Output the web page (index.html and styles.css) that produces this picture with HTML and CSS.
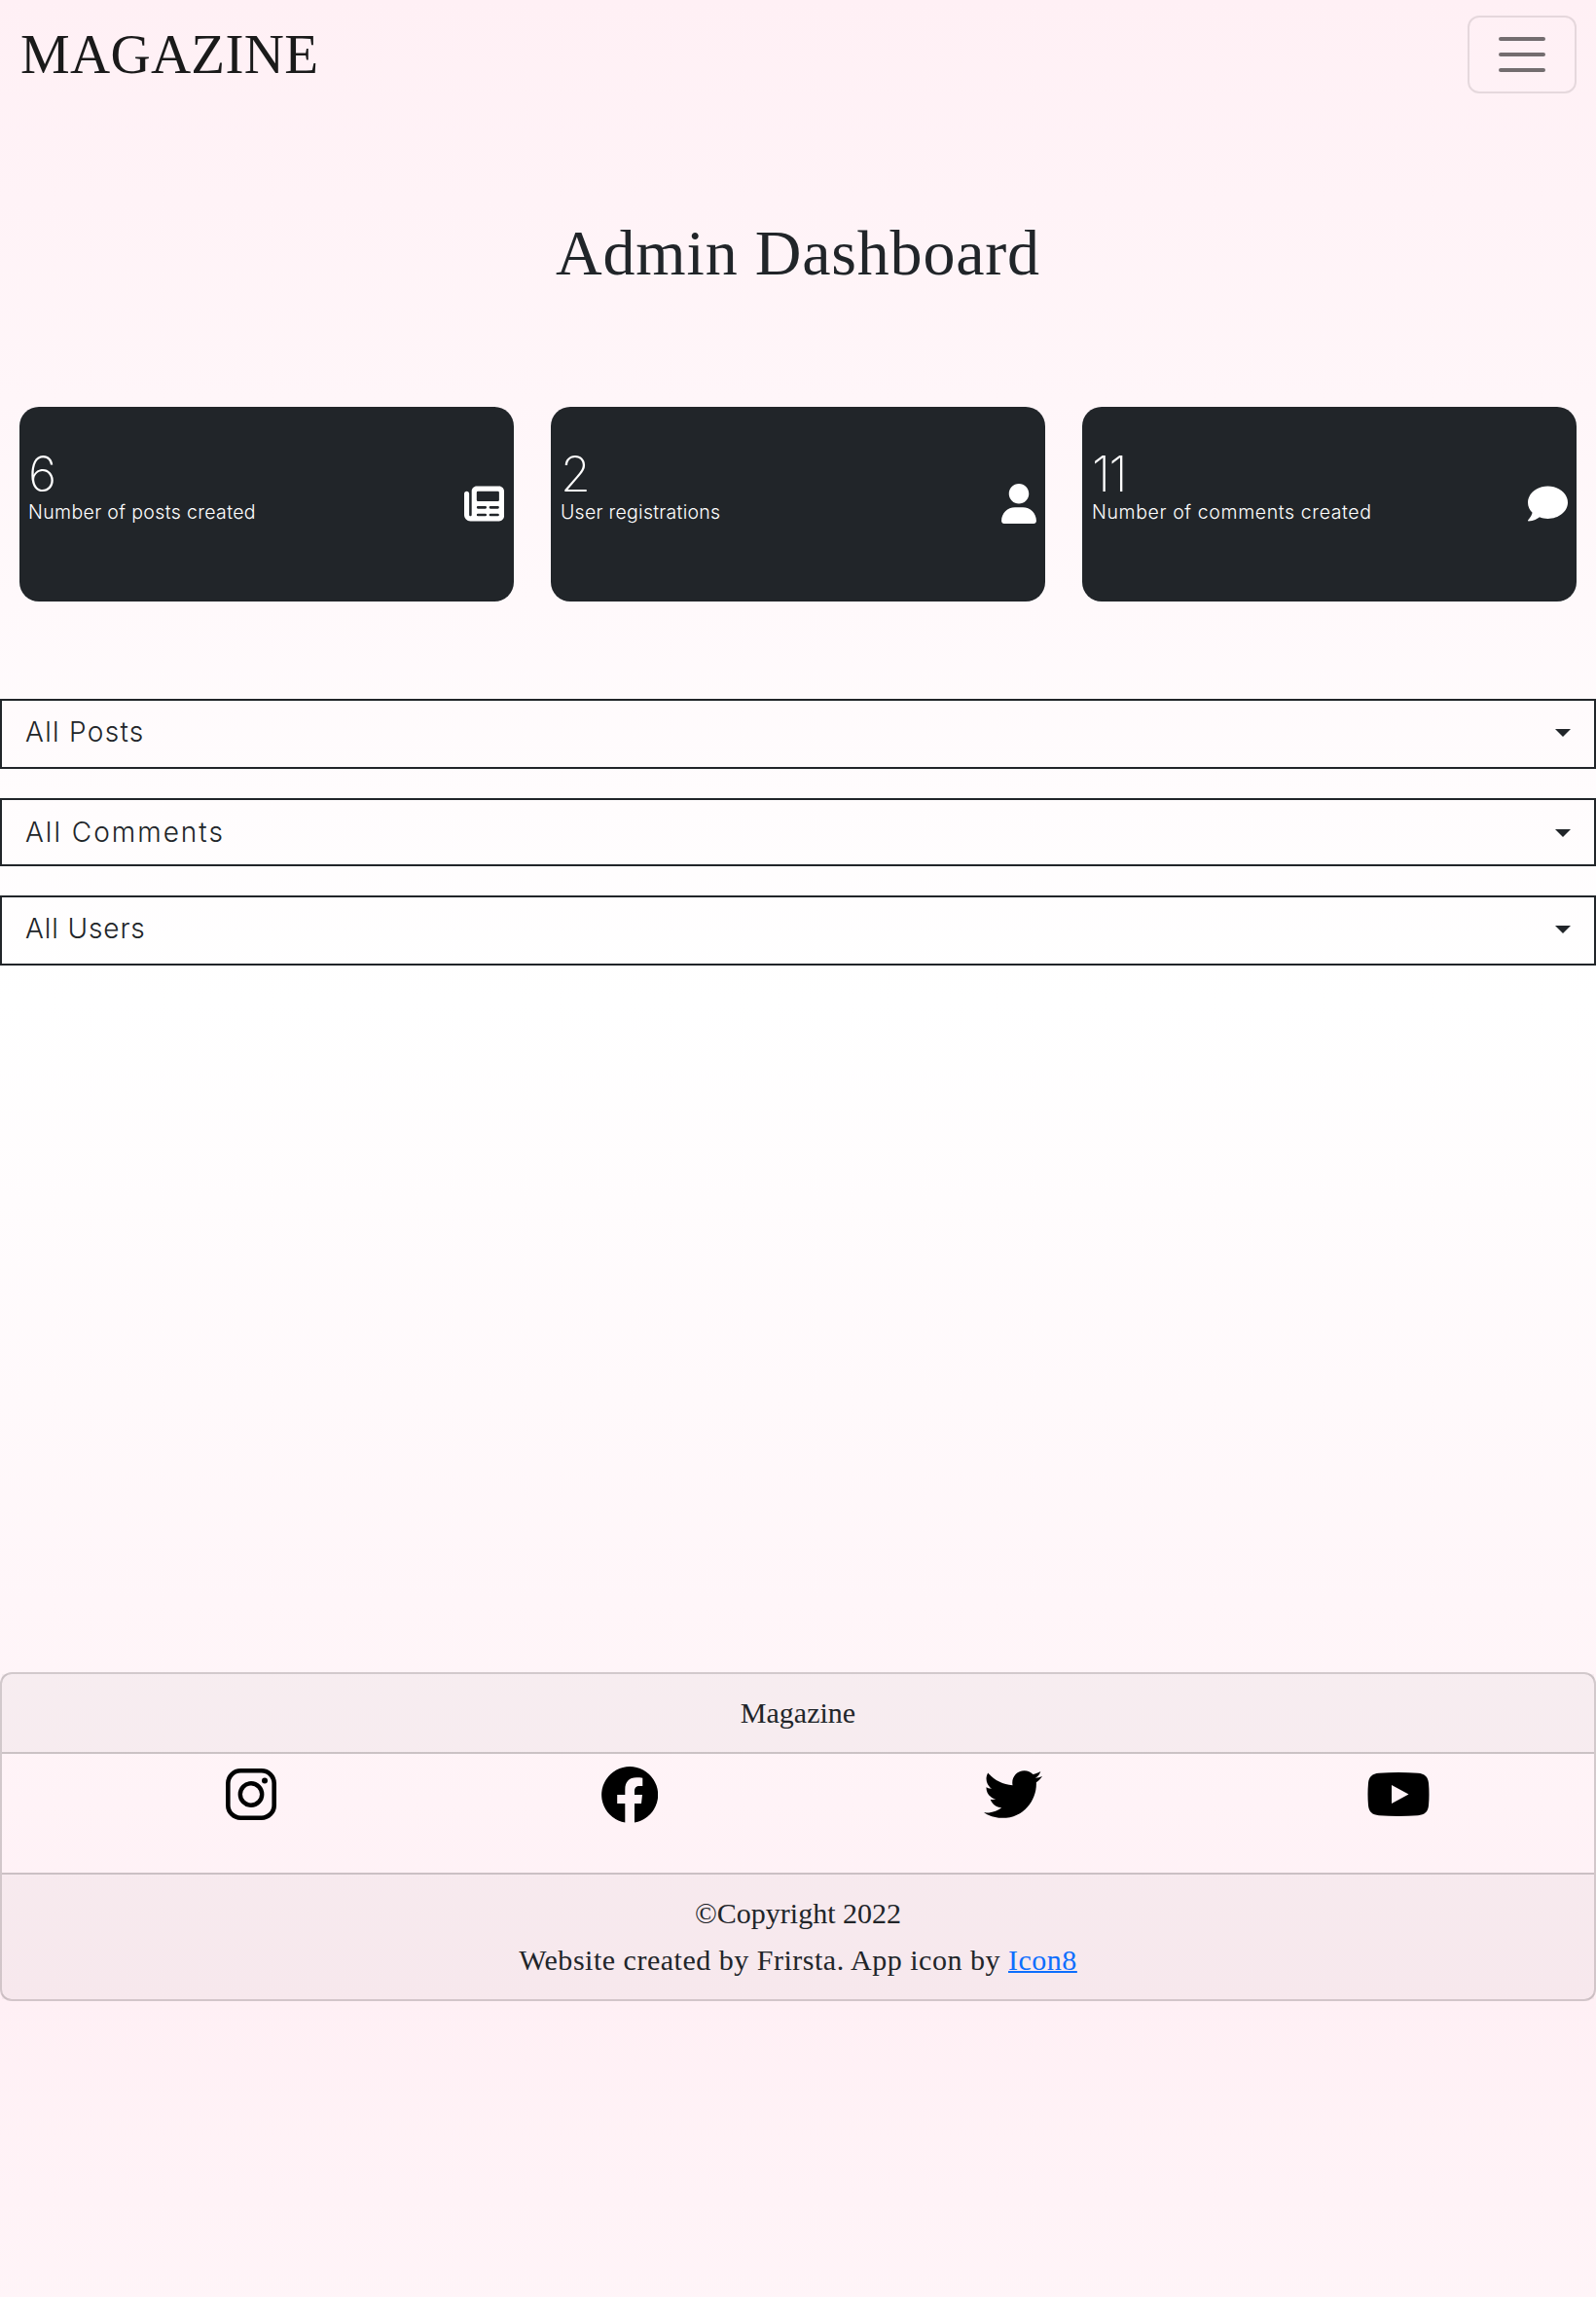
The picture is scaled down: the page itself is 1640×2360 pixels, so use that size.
FILE: index.html
```html
<!DOCTYPE html>
<html lang="en">
<head>
<meta charset="utf-8">
<title>Admin Dashboard</title>
<link rel="stylesheet" href="styles.css">
</head>
<body>
<nav class="navbar">
  <a class="brand">MAGAZINE</a>
  <button class="toggler" aria-label="Toggle navigation">
    <svg width="60" height="60" viewBox="0 0 30 30"><path stroke="rgba(0,0,0,.55)" stroke-linecap="round" stroke-width="2" d="M4 7h22M4 15h22M4 23h22"/></svg>
  </button>
</nav>
<main class="main">
  <h1 class="title">Admin Dashboard</h1>
  <section class="stats">
    <article class="stat">
      <div><div class="number">6</div><div class="label label-posts">Number of posts created</div></div>
      <svg width="41" height="41" viewBox="0 0 512 512"><path fill="#fff" fill-rule="evenodd" d="M160 32H448C483 32 512 61 512 96V416C512 451 483 480 448 480H80C36 480 0 444 0 400V128C0 110 14 96 32 96S64 110 64 128V400C64 409 71 416 80 416S96 409 96 400V96C96 61 125 32 160 32ZM160 112V208Q160 224 176 224H432Q448 224 448 208V112Q448 96 432 96H176Q160 96 160 112ZM176 288A16 16 0 0 0 176 320H272A16 16 0 0 0 272 288ZM336 288A16 16 0 0 0 336 320H432A16 16 0 0 0 432 288ZM176 384A16 16 0 0 0 176 416H272A16 16 0 0 0 272 384ZM336 384A16 16 0 0 0 336 416H432A16 16 0 0 0 432 384Z"/></svg>
    </article>
    <article class="stat stat-wide">
      <div><div class="number">2</div><div class="label label-users">User registrations</div></div>
      <svg width="36" height="41" viewBox="0 0 448 512"><path fill="#fff" d="M224 256c70.7 0 128-57.3 128-128S294.700 0 224 0 96 57.300 96 128s57.300 128 128 128zM274.700 304H173.300C77.600 304 0 381.600 0 477.300c0 19.100 15.500 34.700 34.700 34.700h378.700c19.100 0 34.600-15.500 34.600-34.700C448 381.600 370.400 304 274.700 304z"/></svg>
    </article>
    <article class="stat stat-wide">
      <div><div class="number number-tight">11</div><div class="label label-comments">Number of comments created</div></div>
      <svg width="41" height="41" viewBox="0 0 512 512"><path fill="#fff" d="M256 32C114.600 32 0 125.100 0 240c0 49.600 21.400 95 57 130.700-12.500 50.400-54.300 95.300-54.800 95.800-2.200 2.200-2.900 5.700-1.500 8.700S4.800 480 8 480c66.300 0 116-31.800 140.600-51.400C181.200 440.900 217.600 448 256 448c141.400 0 256-93.100 256-208S397.400 32 256 32z"/></svg>
    </article>
  </section>
  <section class="panels">
    <button class="panel panel-posts"><span>All Posts</span><i class="caret"></i></button>
    <button class="panel panel-comments"><span>All Comments</span><i class="caret"></i></button>
    <button class="panel panel-users"><span>All Users</span><i class="caret"></i></button>
  </section>
</main>
<footer class="footer">
  <div class="footer-head">Magazine</div>
  <div class="social">
    <svg width="52" height="53" viewBox="0 0 52 53"><rect x="2.300" y="2.300" width="47.400" height="48.400" rx="13" fill="none" stroke="#000" stroke-width="4.600"/><circle cx="26" cy="26.500" r="11.200" fill="none" stroke="#000" stroke-width="4.400"/><circle cx="40" cy="12.500" r="3"/></svg>
    <svg width="58" height="58" viewBox="0 0 58 58"><path d="M24.300 57.600A29 29 0 1 1 34 57.600V38H41L42 29H34V25.500C34 21.500 36 20 39 20H42.300V11.700C40.500 11.400 38.500 11.200 36 11.200C28.500 11.200 24.300 15.500 24.300 23.500V29H16.200V38H24.300Z"/></svg>
    <svg width="60" height="49" viewBox="0 48 512 416"><path d="M459.370 151.716c.325 4.548.325 9.097.325 13.645 0 138.720-105.583 298.558-298.558 298.558-59.452 0-114.680-17.219-161.137-47.106 8.447.974 16.568 1.299 25.340 1.299 49.055 0 94.213-16.568 130.274-44.832-46.132-.975-84.792-31.188-98.112-72.772 6.498.974 12.995 1.624 19.818 1.624 9.421 0 18.843-1.300 27.614-3.573-48.081-9.747-84.143-51.980-84.143-102.985v-1.299c13.969 7.797 30.214 12.670 47.431 13.319-28.264-18.843-46.781-51.005-46.781-87.391 0-19.492 5.197-37.360 14.294-52.954 51.655 63.675 129.300 105.258 216.365 109.807-1.624-7.797-2.599-15.918-2.599-24.040 0-57.828 46.782-104.934 104.934-104.934 30.213 0 57.502 12.670 76.670 33.137 23.715-4.548 46.456-13.320 66.599-25.340-7.798 24.366-24.366 44.833-46.132 57.827 21.117-2.273 41.584-8.122 60.426-16.243-14.292 20.791-32.161 39.308-52.628 54.253z"/></svg>
    <svg width="64" height="45" viewBox="0 0 64 45"><path fill-rule="evenodd" d="M12 .8Q32-.8 52 .8C59 1.400 62.300 4.500 63 11Q64 22.500 63 34C62.300 40.500 59 43.600 52 44.200Q32 45.800 12 44.200C5 43.600 1.700 40.500 1 34Q0 22.500 1 11C1.700 4.500 5 1.400 12 .8ZM25 13V32L42.500 22.500Z"/></svg>
  </div>
  <div class="footer-foot">
    <div class="copy">©Copyright 2022</div>
    <div class="credit">Website created by Frirsta. App icon by <a class="link">Icon8</a></div>
  </div>
</footer>
</body>
</html>
```
FILE: styles.css
```css
* { box-sizing: border-box; }

body {
  margin: 0;
  background: linear-gradient(lavenderblush, white, lavenderblush);
  color: #212529;
  font-family: "Liberation Serif", serif;
}

.navbar {
  display: flex;
  justify-content: space-between;
  align-items: center;
  height: 112px;
  padding: 0 20px 0 21px;
}

.brand {
  font-size: 57px;
  line-height: 72px;
  letter-spacing: .3px;
  color: #1a1a1a;
}

.toggler {
  display: flex;
  align-items: center;
  justify-content: center;
  width: 112px;
  height: 80px;
  padding: 0;
  background: transparent;
  border: 2px solid rgba(0, 0, 0, .1);
  border-radius: 12px;
}

.main { height: 1606px; }

.title {
  margin: 0;
  padding-top: 108px;
  font-size: 66px;
  font-weight: 400;
  line-height: 80px;
  letter-spacing: .8px;
  text-align: center;
}

.stats {
  display: grid;
  grid-template-columns: repeat(3, 1fr);
  gap: 38px;
  margin-top: 118px;
  padding: 0 20px;
}

.stat {
  display: flex;
  justify-content: space-between;
  align-items: center;
  height: 200px;
  padding: 0 10px 2px 9px;
  border-radius: 20px;
  background: #212529;
  color: #fff;
  font-family: Inter, sans-serif;
}

.stat-wide { padding: 0 9px 2px 10px; }

.number {
  font-size: 50px;
  font-weight: 200;
  line-height: 48px;
}

.number-tight { letter-spacing: -1.5px; }

.label {
  margin-bottom: 31px;
  font-size: 19.5px;
  font-weight: 300;
  line-height: 30px;
}

.label-posts { letter-spacing: .36px; }
.label-users { letter-spacing: .27px; }
.label-comments { letter-spacing: .62px; }

.panels {
  display: flex;
  flex-direction: column;
  gap: 30px;
  margin-top: 100px;
}

.panel {
  display: flex;
  justify-content: space-between;
  align-items: center;
  height: 72px;
  padding: 0 24px 4px;
  border: 2px solid #212529;
  background: transparent;
  color: #212529;
  font: 300 28px Inter, sans-serif;
}

.panel-posts { letter-spacing: 1.3px; }
.panel-comments {
  height: 70px;
  padding-bottom: 1px;
  letter-spacing: 2px;
}
.panel-users { letter-spacing: .9px; }

.caret {
  margin-top: 2px;
  border: 8px solid transparent;
  border-top-color: #212529;
  border-bottom: 0;
}

.footer {
  border: 2px solid rgba(0, 0, 0, .175);
  border-radius: 12px;
  font-size: 30px;
  line-height: 48px;
  text-align: center;
}

.footer-head {
  height: 82px;
  padding-top: 16px;
  border-bottom: 2px solid rgba(0, 0, 0, .175);
  background: rgba(0, 0, 0, .03);
}

.social {
  display: flex;
  justify-content: space-around;
  align-items: center;
  height: 122px;
  padding: 0 2px 39px 63px;
}

.footer-foot {
  height: 130px;
  padding-top: 16px;
  border-top: 2px solid rgba(0, 0, 0, .175);
  background: rgba(0, 0, 0, .03);
}

.credit { letter-spacing: .51px; }

.link {
  color: #0d6efd;
  text-decoration: underline;
  text-decoration-thickness: 2px;
}
```
